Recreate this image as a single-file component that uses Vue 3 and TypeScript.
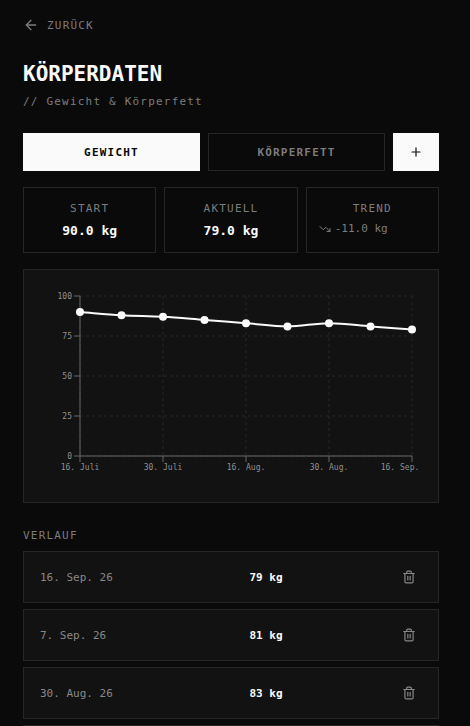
<script setup lang="ts">
import { computed, ref } from 'vue'

interface Entry {
  date: string
  tick: string
  weight: number
}

const tab = ref<'weight' | 'fat'>('weight')

const entries = ref<Entry[]>([
  { date: '16. Juli 26', tick: '16. Juli', weight: 90 },
  { date: '23. Juli 26', tick: '23. Juli', weight: 88 },
  { date: '30. Juli 26', tick: '30. Juli', weight: 87 },
  { date: '7. Aug. 26', tick: '7. Aug.', weight: 85 },
  { date: '16. Aug. 26', tick: '16. Aug.', weight: 83 },
  { date: '23. Aug. 26', tick: '23. Aug.', weight: 81 },
  { date: '30. Aug. 26', tick: '30. Aug.', weight: 83 },
  { date: '7. Sep. 26', tick: '7. Sep.', weight: 81 },
  { date: '16. Sep. 26', tick: '16. Sep.', weight: 79 },
])

const history = computed(() => [...entries.value].reverse())
const start = computed(() => entries.value[0]?.weight ?? 0)
const current = computed(() => entries.value[entries.value.length - 1]?.weight ?? 0)
const trend = computed(() => (current.value - start.value).toFixed(1))

// Plot area inside the 382 x 200 chart
const left = 40
const right = 372
const top = 10
const bottom = 170

const yTicks = [0, 25, 50, 75, 100].map((value) => ({
  value,
  y: bottom - ((bottom - top) * value) / 100,
}))

const points = computed(() =>
  entries.value.map((e, i, all) => ({
    x: left + ((right - left) * i) / Math.max(all.length - 1, 1),
    y: bottom - ((bottom - top) * e.weight) / 100,
    tick: e.tick,
  })),
)

const xTicks = computed(() =>
  points.value
    .filter((_, i) => i % 2 === 0)
    .map((p) => ({ ...p, labelX: Math.min(p.x, 360) })),
)

// Monotone cubic interpolation through the points
const linePath = computed(() => {
  const p = points.value
  if (!p.length) return ''
  const slope = (i: number) => (p[i + 1].y - p[i].y) / (p[i + 1].x - p[i].x)
  const tangent = (i: number) => {
    if (p.length < 2) return 0
    if (i === 0) return slope(0)
    if (i === p.length - 1) return slope(i - 1)
    const a = slope(i - 1)
    const b = slope(i)
    return a * b <= 0 ? 0 : (2 * a * b) / (a + b)
  }
  let d = `M${p[0].x},${p[0].y}`
  for (let i = 0; i < p.length - 1; i++) {
    const h = (p[i + 1].x - p[i].x) / 3
    d += `C${p[i].x + h},${p[i].y + tangent(i) * h},${p[i + 1].x - h},${p[i + 1].y - tangent(i + 1) * h},${p[i + 1].x},${p[i + 1].y}`
  }
  return d
})

function remove(entry: Entry) {
  entries.value = entries.value.filter((e) => e !== entry)
}
</script>

<template>
  <main class="page">
    <a class="back" href="#">
      <svg class="icon-16" viewBox="0 0 24 24" aria-hidden="true">
        <path d="m12 19-7-7 7-7" />
        <path d="M19 12H5" />
      </svg>
      <span>ZURÜCK</span>
    </a>

    <header class="header">
      <h1>KÖRPERDATEN</h1>
      <p>// Gewicht &amp; Körperfett</p>
    </header>

    <div class="tabs">
      <button type="button" class="tab" :class="{ active: tab === 'weight' }" @click="tab = 'weight'">
        GEWICHT
      </button>
      <button type="button" class="tab" :class="{ active: tab === 'fat' }" @click="tab = 'fat'">
        KÖRPERFETT
      </button>
      <button type="button" class="add" aria-label="Eintrag hinzufügen">
        <svg class="icon-14" viewBox="0 0 24 24" aria-hidden="true">
          <path d="M5 12h14" />
          <path d="M12 5v14" />
        </svg>
      </button>
    </div>

    <section class="stats">
      <div class="stat">
        <div class="label">START</div>
        <div class="value">{{ start.toFixed(1) }} kg</div>
      </div>
      <div class="stat">
        <div class="label">AKTUELL</div>
        <div class="value">{{ current.toFixed(1) }} kg</div>
      </div>
      <div class="stat">
        <div class="label">TREND</div>
        <div class="trend">
          <svg class="icon-12" viewBox="0 0 24 24" aria-hidden="true">
            <path d="M22 17 13.5 8.5 8.5 13.5 2 7" />
            <path d="M16 17h6v-6" />
          </svg>
          <span>{{ trend }} kg</span>
        </div>
      </div>
    </section>

    <section class="chart">
      <svg viewBox="0 0 382 200" role="img" aria-label="Gewichtsverlauf">
        <g class="grid">
          <line v-for="t in yTicks" :key="t.value" :x1="left" :x2="right" :y1="t.y" :y2="t.y" />
          <line v-for="t in xTicks" :key="t.tick" :x1="t.x" :x2="t.x" :y1="top" :y2="bottom" />
        </g>
        <g class="axis">
          <line :x1="left" :x2="right" :y1="bottom" :y2="bottom" />
          <line :x1="left" :x2="left" :y1="top" :y2="bottom" />
          <line v-for="t in yTicks" :key="t.value" :x1="left - 6" :x2="left" :y1="t.y" :y2="t.y" />
          <line v-for="t in xTicks" :key="t.tick" :x1="t.x" :x2="t.x" :y1="bottom" :y2="bottom + 6" />
        </g>
        <g class="ticks">
          <text v-for="t in yTicks" :key="t.value" class="tick-y" :x="left - 8" :y="t.y + 3">{{ t.value }}</text>
          <text v-for="t in xTicks" :key="t.tick" class="tick-x" :x="t.labelX" :y="bottom + 14">{{ t.tick }}</text>
        </g>
        <path class="series" :d="linePath" />
        <circle v-for="p in points" :key="p.tick" class="dot" :cx="p.x" :cy="p.y" r="4" />
      </svg>
    </section>

    <section class="history">
      <h2 class="label">VERLAUF</h2>
      <ul>
        <li v-for="entry in history" :key="entry.date">
          <span class="date">{{ entry.date }}</span>
          <span class="weight">{{ entry.weight }} kg</span>
          <button type="button" class="remove" aria-label="Löschen" @click="remove(entry)">
            <svg class="icon-14" viewBox="0 0 24 24" aria-hidden="true">
              <path d="M3 6h18" />
              <path d="M19 6v14c0 1-1 2-2 2H7c-1 0-2-1-2-2V6" />
              <path d="M8 6V4c0-1 1-2 2-2h4c1 0 2 1 2 2v2" />
              <path d="M10 11v6" />
              <path d="M14 11v6" />
            </svg>
          </button>
        </li>
      </ul>
    </section>
  </main>
</template>

<style>
body {
  background: #0a0a0a;
}
</style>

<style scoped>
.page {
  box-sizing: border-box;
  height: 100vh;
  overflow-y: auto;
  scrollbar-width: none;
  padding: 16px 31px 24px 23px;
  background: #0a0a0a;
  color: #fafafa;
  font-family: 'DejaVu Sans Mono', monospace;
  font-size: 11px;
  line-height: 16px;
}

svg {
  display: block;
  fill: none;
  stroke: currentColor;
  stroke-width: 2;
  stroke-linecap: round;
  stroke-linejoin: round;
  flex: none;
}

.icon-12 {
  width: 12px;
  height: 12px;
}

.icon-14 {
  width: 14px;
  height: 14px;
}

.icon-16 {
  width: 16px;
  height: 16px;
}

button {
  margin: 0;
  font: inherit;
  cursor: pointer;
}

.back {
  display: flex;
  align-items: center;
  gap: 8px;
  color: #7c7c7c;
  letter-spacing: 1.2px;
  text-decoration: none;
}

.back span,
.date,
.weight {
  padding-top: 2px;
}

.header {
  margin: 26px 0 23px;
}

h1 {
  margin: 0 0 6px;
  font-size: 21px;
  line-height: 28px;
  font-weight: 700;
}

.header p {
  margin: 0;
  color: #7c7c7c;
  letter-spacing: 1.2px;
}

.tabs {
  display: flex;
  gap: 8px;
  margin-bottom: 16px;
}

.tab {
  flex: 1;
  padding: 11px 0 9px;
  border: 1px solid #262626;
  background: transparent;
  color: #7c7c7c;
  font-weight: 700;
  letter-spacing: 1.2px;
}

.tab.active {
  border-color: #fafafa;
  background: #fafafa;
  color: #0a0a0a;
}

.add {
  display: flex;
  align-items: center;
  padding: 0 16px;
  border: 0;
  background: #fafafa;
  color: #0a0a0a;
}

.stats {
  display: grid;
  grid-template-columns: repeat(3, 1fr);
  gap: 8px;
  margin-bottom: 16px;
}

.stat {
  padding: 13px 12px 11px;
  border: 1px solid #262626;
  text-align: center;
}

.label {
  margin: 0 0 4px;
  color: #7c7c7c;
  font-size: 11px;
  font-weight: 400;
  letter-spacing: 1.2px;
}

.value {
  font-size: 13px;
  line-height: 20px;
  font-weight: 700;
}

.trend {
  display: flex;
  align-items: center;
  gap: 4px;
  color: #7c7c7c;
}

.chart {
  padding: 16px;
  margin-bottom: 25px;
  border: 1px solid #262626;
  background: #121212;
}

.chart svg {
  width: 100%;
  stroke: none;
  stroke-linecap: butt;
  stroke-width: 1;
}

.grid line {
  stroke: #262626;
  stroke-dasharray: 3 3;
}

.axis line {
  stroke: #666666;
}

.ticks text {
  fill: #909090;
  font-size: 8px;
}

.tick-x {
  text-anchor: middle;
}

.tick-y {
  text-anchor: end;
}

.series {
  stroke: #fafafa;
  stroke-width: 2;
}

.dot {
  fill: #fafafa;
}

.history .label {
  margin-bottom: 7px;
}

ul {
  display: flex;
  flex-direction: column;
  gap: 6px;
  margin: 0;
  padding: 0;
  list-style: none;
}

li {
  display: flex;
  align-items: center;
  gap: 16px;
  padding: 12px 16px;
  border: 1px solid #262626;
  background: #121212;
}

.date {
  width: 96px;
  color: #888888;
}

.weight {
  flex: 1;
  text-align: center;
  font-weight: 700;
}

.remove {
  padding: 6px;
  border: 0;
  background: transparent;
  color: #888888;
}
</style>
